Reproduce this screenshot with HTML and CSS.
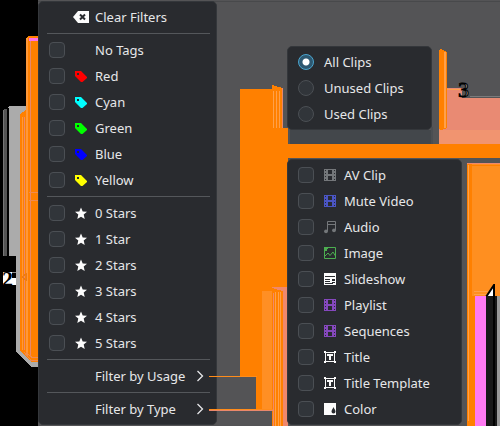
FILE: index.html
```html
<!DOCTYPE html>
<html lang="en">
<head>
<meta charset="utf-8">
<meta name="viewport" content="width=device-width, initial-scale=1">
<title>Clip filters</title>
<link rel="stylesheet" href="styles.css">
</head>
<body>
<svg class="backdrop" viewBox="0 0 500 426" preserveAspectRatio="xMinYMin slice" shape-rendering="crispEdges" aria-hidden="true">
  <defs>
    <clipPath id="two"><rect x="2" y="270" width="14" height="15"/></clipPath>
    <clipPath id="four"><rect x="485" y="284" width="10" height="12"/></clipPath>
  </defs>
  <path fill="#545456" d="M0 0H500V426H0z"/>
  <path fill="#48494b" d="M38 1H500V2H38z"/>
  <path fill="#000" d="M0 0H38V426H0z"/>
  <!-- left edge -->
  <path fill="#ababab" d="M9 106H38V367H31L16 352V256H8V107z"/>
  <path fill="#777" d="M3 110H4V256H3z"/>
  <path fill="#555" d="M4 109H7V256H4z"/>
  <path fill="#000" d="M7 108H9V256H7z"/>
  <path fill="#ff8000" d="M26 38L28 36H38V362H31L20 351V114L26 110z"/>
  <path fill="#ff9838" d="M22 117H23V350H22zM26 38H28V355H26z"/>
  <path fill="#e9886c" d="M24 117H25V350H24zM30 40H31V355H30z"/>
  <path fill="#ff70e8" d="M29 38H38V41H29z"/>
  <path fill="none" stroke="#f08a50" d="M29 192.500H38M29 200.500H38M26 352L32 357.500H38M24 352L31 360.500H38"/>
  <path fill="none" stroke="#e97a18" d="M22 277L26 274V280z"/>
  <!-- centre -->
  <path fill="#ff8000" d="M240 89H272V85L283 88V128H288V144H500V158H288V426H272V409H256V376H240z"/>
  <path fill="#ffa04a" d="M273 91H274V128H273zM276 91H277V128H276zM279 91H280V128H279z"/>
  <path fill="#e9886c" d="M282 88H283V128H282z"/>
  <path fill="#545456" d="M283 88H288V128H283z"/>
  <path fill="#ff8f24" d="M262 291H272V409H262z"/>
  <path fill="#ffa04a" d="M275 292H276V426H275zM278 292H279V426H278zM280 292H281V426H280z"/>
  <path fill="#f0886c" d="M271 287H288V426H283V291L272 288zM273 293H274V426H273z"/>
  <path fill="#43474b" d="M290 130H431V144H290z"/>
  <path fill="#4b4e52" d="M431 127H433V144H431z"/>
  <!-- right edge -->
  <path fill="#e98a73" d="M439 98H500V130H439zM447 88H463V91H447z"/>
  <path fill="#f19470" d="M439 130H500V144H439z"/>
  <path fill="#e98a73" d="M447 91H462V98H447z"/>
  <path fill="#7b7b7b" d="M470 96H500V97H470z"/>
  <path fill="#ff8000" d="M439 50L441 49L447 52V128L441 130L439 129z"/>
  <path fill="#ffa04a" d="M444 52H446V128H444zM447 89H462V90H447z"/>
  <path fill="#ff8f20" d="M467 163H500V296H467z"/>
  <path fill="#f0886c" d="M467 163H500V164H467z"/>
  <path fill="#ff8000" d="M467 164H472V296H475V426H467zM472 165H500V166H472z"/>
  <path fill="#ffa04a" d="M468 165H469V421H468zM474 291H488V292H474zM474 294H487V295H474z"/>
  <path fill="#ff7af2" d="M475 296H486V426H475z"/>
  <path fill="#181818" d="M486 296H497V426H486z"/>
  <path fill="#000" d="M493 296H495V426H493z"/>
  <path fill="#999" d="M497 296H500V426H497z"/>
  <g class="callouts" shape-rendering="auto">
    <path clip-path="url(#two)" fill="#fff" d="M3 272H12V278H16V285H3z"/>
    <path fill="none" stroke="#888" d="M12 272.500H16"/>
    <text clip-path="url(#two)" class="two" x="2" y="286">2</text>
    <text class="three" x="458" y="97">3</text>
    <path clip-path="url(#four)" fill="#fff" stroke="#000" stroke-width="2" d="M486 297L494 285V297z"/>
  </g>
</svg>

<svg class="sprites" aria-hidden="true">
  <symbol id="tag" viewBox="0 0 18 18"><path fill="currentColor" fill-rule="evenodd" d="M4 4H10L16 10V11L11.500 15H10L4 9zM6 6V8H8V6z"/></symbol>
  <symbol id="star" viewBox="0 0 18 18"><path fill="currentColor" d="M10 3.500L11.700 7.400L16 7.700L12.700 10.500L13.700 15L10 12.700L6.300 15L7.300 10.500L4 7.700L8.300 7.400z"/></symbol>
  <symbol id="film" viewBox="0 0 18 18"><path fill="currentColor" fill-rule="evenodd" d="M4 3H16V15H4zM5 4V5H6V4zM5 7V8H6V7zM5 10V11H6V10zM5 13V14H6V13zM14 4V5H15V4zM14 7V8H15V7zM14 10V11H15V10zM14 13V14H15V13zM8 4V8H12V4zM8 10V14H12V10z"/></symbol>
  <symbol id="note" viewBox="0 0 18 18"><path fill="none" stroke="currentColor" d="M7.500 13V3.500H15.500V12M7.500 6.500H15.500"/><circle cx="6" cy="13.300" r="1.900" fill="currentColor"/><circle cx="14" cy="12.300" r="1.900" fill="currentColor"/></symbol>
  <symbol id="image" viewBox="0 0 18 18"><path fill="none" stroke="currentColor" d="M4.500 3.500H15.500V14.500H4.500zM5 12L8 9L10 11.500L13 8L15.500 12"/><path fill="currentColor" d="M4 3H8V5H7V7H4z"/></symbol>
  <symbol id="slides" viewBox="0 0 18 18"><path fill="currentColor" fill-rule="evenodd" d="M4 3H16V15H4zM5 6V7H15V6zM5 9V10H10V9zM5 11V12H10V11zM5 13V14H13V13zM12 9V11H15V9zM12 12V13H15V12z"/></symbol>
  <symbol id="title" viewBox="0 0 18 18"><path fill="none" stroke="currentColor" d="M5.500 4.500H14.500V13.500H5.500z"/><path fill="currentColor" d="M4 3H6V5H4zM14 3H16V5H14zM4 13H6V15H4zM14 13H16V15H14zM7 6H13V8H11V12H9V8H7z"/></symbol>
  <symbol id="color" viewBox="0 0 18 18"><path fill="currentColor" fill-rule="evenodd" d="M4 3H16V15H4zM13.500 7C13 8.500 11.500 10 11.500 11.500A2 2 0 0 0 15.500 11.500C15.500 10 14 8.500 13.500 7z"/></symbol>
  <symbol id="clear" viewBox="0 0 18 18"><path fill="currentColor" d="M2 9L7 3H18V15H7z"/><path stroke="#292b2f" stroke-width="2" d="M9 6.500L14 11.500M14 6.500L9 11.500"/></symbol>
  <symbol id="chevron" viewBox="0 0 8 12"><path fill="none" stroke="currentColor" stroke-width="1.300" d="M1.500 1L6.500 6L1.500 11"/></symbol>
</svg>

<main class="layout">
  <section class="menu menu-main" aria-label="Filters">
    <button class="row" type="button"><svg class="icon white"><use href="#clear"/></svg><span class="text">Clear Filters</span></button>
    <hr>
    <label class="row"><input type="checkbox"><span class="text">No Tags</span></label>
    <label class="row"><input type="checkbox"><svg class="icon red"><use href="#tag"/></svg><span class="text">Red</span></label>
    <label class="row"><input type="checkbox"><svg class="icon cyan"><use href="#tag"/></svg><span class="text">Cyan</span></label>
    <label class="row"><input type="checkbox"><svg class="icon green"><use href="#tag"/></svg><span class="text">Green</span></label>
    <label class="row"><input type="checkbox"><svg class="icon blue"><use href="#tag"/></svg><span class="text">Blue</span></label>
    <label class="row"><input type="checkbox"><svg class="icon yellow"><use href="#tag"/></svg><span class="text">Yellow</span></label>
    <hr>
    <label class="row"><input type="checkbox"><svg class="icon white"><use href="#star"/></svg><span class="text">0 Stars</span></label>
    <label class="row"><input type="checkbox"><svg class="icon white"><use href="#star"/></svg><span class="text">1 Star</span></label>
    <label class="row"><input type="checkbox"><svg class="icon white"><use href="#star"/></svg><span class="text">2 Stars</span></label>
    <label class="row"><input type="checkbox"><svg class="icon white"><use href="#star"/></svg><span class="text">3 Stars</span></label>
    <label class="row"><input type="checkbox"><svg class="icon white"><use href="#star"/></svg><span class="text">4 Stars</span></label>
    <label class="row"><input type="checkbox"><svg class="icon white"><use href="#star"/></svg><span class="text">5 Stars</span></label>
    <hr>
    <button class="row link-usage" type="button"><span class="text">Filter by Usage</span><svg class="chevron"><use href="#chevron"/></svg></button>
    <hr>
    <button class="row link-type" type="button"><span class="text">Filter by Type</span><svg class="chevron"><use href="#chevron"/></svg></button>
  </section>

  <div class="submenus">
    <section class="menu menu-usage" aria-label="Filter by Usage">
      <label class="row"><input type="radio" name="usage" checked><span class="text">All Clips</span></label>
      <label class="row"><input type="radio" name="usage"><span class="text">Unused Clips</span></label>
      <label class="row"><input type="radio" name="usage"><span class="text">Used Clips</span></label>
    </section>
    <section class="menu menu-type" aria-label="Filter by Type">
      <label class="row"><input type="checkbox"><svg class="icon gray"><use href="#film"/></svg><span class="text">AV Clip</span></label>
      <label class="row"><input type="checkbox"><svg class="icon indigo"><use href="#film"/></svg><span class="text">Mute Video</span></label>
      <label class="row"><input type="checkbox"><svg class="icon gray"><use href="#note"/></svg><span class="text">Audio</span></label>
      <label class="row"><input type="checkbox"><svg class="icon leaf"><use href="#image"/></svg><span class="text">Image</span></label>
      <label class="row"><input type="checkbox"><svg class="icon white"><use href="#slides"/></svg><span class="text">Slideshow</span></label>
      <label class="row"><input type="checkbox"><svg class="icon purple"><use href="#film"/></svg><span class="text">Playlist</span></label>
      <label class="row"><input type="checkbox"><svg class="icon purple"><use href="#film"/></svg><span class="text">Sequences</span></label>
      <label class="row"><input type="checkbox"><svg class="icon white"><use href="#title"/></svg><span class="text">Title</span></label>
      <label class="row"><input type="checkbox"><svg class="icon white"><use href="#title"/></svg><span class="text">Title Template</span></label>
      <label class="row"><input type="checkbox"><svg class="icon white"><use href="#color"/></svg><span class="text">Color</span></label>
    </section>
  </div>
</main>
</body>
</html>
```
FILE: styles.css
```css
* {
  box-sizing: border-box;
}

body {
  margin: 0;
  background: #545456;
  color: #e6e7e9;
  font: 13px/26px "Noto Sans", sans-serif;
}

.backdrop {
  position: absolute;
  inset: 0;
  z-index: -1;
  width: 100%;
  height: 100%;
}

.callouts text {
  font: 22px "Liberation Serif", serif;
  fill: #000;
}

.callouts .two {
  font-weight: bold;
}

.callouts .three {
  fill: #999;
  stroke: #000;
  stroke-width: 1;
}

.sprites {
  position: absolute;
  width: 0;
  height: 0;
}

.layout {
  display: flex;
  align-items: flex-start;
  gap: 70px;
  padding: 1px 37px 1px 38px;
}

.submenus {
  display: flex;
  flex-direction: column;
  align-items: flex-start;
  gap: 29px;
  padding-top: 45px;
}

.menu {
  padding: 2px 0;
  border: 1px solid #34373b;
  border-radius: 5px;
  background: #292b2f;
}

.menu-main {
  flex: 0 0 auto;
  min-width: 179px;
}

.menu-usage {
  min-width: 145px;
}

.menu-type {
  min-width: 175px;
}

.row {
  position: relative;
  display: grid;
  grid-template-columns: 16px 18px 1fr auto;
  column-gap: 6px;
  align-items: center;
  width: 100%;
  height: 26px;
  padding: 0 12px 0 10px;
  border: 0;
  background: none;
  color: inherit;
  font: inherit;
  text-align: left;
  white-space: nowrap;
}

.menu-usage .row {
  grid-template-columns: 16px 1fr;
  column-gap: 10px;
}

.icon {
  grid-column: 2;
  width: 18px;
  height: 18px;
}

.text {
  grid-column: 3;
}

.menu-usage .text {
  grid-column: 2;
}

.chevron {
  width: 8px;
  height: 12px;
}

input {
  appearance: none;
  width: 16px;
  height: 16px;
  margin: 0;
  border: 1px solid #4b4f54;
  border-radius: 4px;
  background: #31353a;
}

input[type="radio"] {
  border-radius: 50%;
}

input[type="radio"]:checked {
  border-color: #4ba6d0;
  background: radial-gradient(circle, #fff 3px, #2d5871 4px);
}

hr {
  height: 1px;
  margin: 3px 6px 3px 8px;
  border: 0;
  background: #54575b;
}

/* Leader lines from a menu entry to its submenu */
.link-usage::after,
.link-type::after {
  content: "";
  position: absolute;
  top: 13px;
  left: 170px;
  width: 48px;
  height: 1px;
  background: #ff8c1a;
}

.link-type::after {
  width: 64px;
  height: 2px;
  background: linear-gradient(#ff8c1a 50%, #e9886c 50%);
}

.white { color: #fcfcfc; }
.red { color: #ff0000; }
.cyan { color: #00ffff; }
.green { color: #00ff00; }
.blue { color: #0000ff; }
.yellow { color: #ffff00; }
.gray { color: #74777a; }
.indigo { color: #4a55c4; }
.leaf { color: #4cae50; }
.purple { color: #8548bd; }
```
